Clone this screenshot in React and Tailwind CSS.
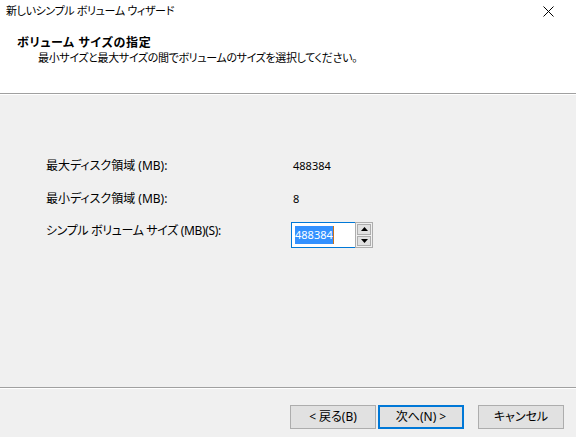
export default function App() {
  const font = {
    fontFamily: '"Noto Sans", "Noto Sans CJK JP", sans-serif',
  };

  return (
    <div
      className="w-[576px] h-[437px] bg-white text-[12px] text-black flex flex-col overflow-hidden [font-feature-settings:'palt']"
      style={font}
    >
      {/* title bar + header */}
      <div className="h-[94px] border-b border-[#a0a0a0] pt-[3px] flex flex-col">
        <div className="flex items-center justify-between pl-[6px] pr-[22px] h-[15px]">
          <span className="leading-[15px] text-[11px] tracking-[-0.35px]">新しいシンプル ボリューム ウィザード</span>
          <svg width="11" height="11" viewBox="0 0 11 11" className="mt-[1px]">
            <path d="M0.5 0.5 L10.5 10.5 M10.5 0.5 L0.5 10.5" stroke="#000" strokeWidth="1" fill="none" />
          </svg>
        </div>
        <div className="mt-[17px] pl-[17px] font-bold leading-[15px] tracking-[0.6px]">ボリューム サイズの指定</div>
        <div className="pl-[38px] leading-[15px] text-[11px] tracking-[-0.35px]">
          最小サイズと最大サイズの間でボリュームのサイズを選択してください。
        </div>
      </div>

      {/* body */}
      <div className="h-[294px] bg-[#f0f0f0] border-t border-white border-b border-b-[#a0a0a0] pt-[61px]">
        <div className="flex flex-col gap-[13px]">
          <div className="flex h-[20px] items-center leading-[20px]">
            <span className="w-[291px] pl-[46px]">最大ディスク領域 (MB):</span>
            <span className="pl-[2px] text-[11px]">488384</span>
          </div>
          <div className="flex h-[20px] items-center leading-[20px]">
            <span className="w-[291px] pl-[46px]">最小ディスク領域 (MB):</span>
            <span className="pl-[2px] text-[11px]">8</span>
          </div>
          <div className="flex h-[26px] items-start">
            <span className="w-[291px] pl-[46px] leading-[20px] -mt-[1px] tracking-[-0.35px]">
              シンプル ボリューム サイズ (MB)(S):
            </span>
            <div className="flex h-[26px] w-[82px] bg-white">
              <div className="flex-1 border border-[#0078d7] border-r-0 flex items-center pl-[3px]">
                <span className="bg-[#3391ff] text-white leading-[18px] h-[18px] text-[11px]">488384</span>
                <span className="w-[1px] h-[18px] bg-[#c9741a]" />
              </div>
              <div className="w-[18px] border border-[#adadad] flex flex-col p-[1px] gap-[1px] bg-[#f0f0f0]">
                <div className="flex-1 border border-[#adadad] bg-[#e1e1e1] flex items-center justify-center">
                  <svg width="7" height="4" viewBox="0 0 7 4"><path d="M3.5 0 L7 4 L0 4 Z" fill="#000" /></svg>
                </div>
                <div className="flex-1 border border-[#adadad] bg-[#e1e1e1] flex items-center justify-center">
                  <svg width="7" height="4" viewBox="0 0 7 4"><path d="M0 0 L7 0 L3.5 4 Z" fill="#000" /></svg>
                </div>
              </div>
            </div>
          </div>
        </div>
      </div>

      {/* footer */}
      <div className="flex-1 bg-[#f0f0f0] border-t border-white pt-[16px] pl-[290px] flex items-start">
        <button className="w-[86px] h-[24px] bg-[#e1e1e1] border border-[#adadad] leading-[22px] text-center">
          &lt; 戻る(B)
        </button>
        <button className="ml-[2px] w-[86px] h-[24px] bg-[#e1e1e1] border-2 border-[#0078d7] leading-[20px] text-center">
          次へ(N) &gt;
        </button>
        <button className="ml-[14px] w-[86px] h-[24px] bg-[#e1e1e1] border border-[#adadad] leading-[22px] text-center">
          キャンセル
        </button>
      </div>
    </div>
  );
}
